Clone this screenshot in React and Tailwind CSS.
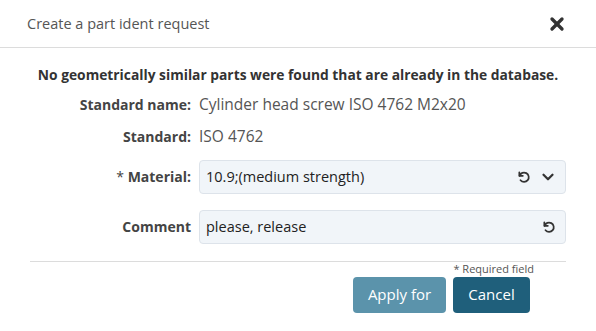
import { ChevronDown, X } from "lucide-react";

const Row = ({ label, children, className = "" }) => (
  <div className={`flex items-center ${className}`}>
    <div className="w-[169px] shrink-0 pr-2 text-right font-bold text-[#444]">{label}</div>
    <div className="flex-1 min-w-0">{children}</div>
  </div>
);

const Undo = () => (
  <svg width="14" height="14" viewBox="0 0 24 24" fill="none" stroke="#333" strokeWidth="3" strokeLinecap="round" strokeLinejoin="round">
    <path d="M4 4v6h6" />
    <path d="M4.5 10A8 8 0 1 1 6 17.5" />
  </svg>
);

export default function App() {
  return (
    <div className="w-[596px] h-[331px] bg-white text-[14px] text-[#333] font-['Open_Sans',sans-serif]">
      {/* Header */}
      <div className="h-[48px] flex items-center justify-between pl-[27px] pr-[29px] border-b border-[#dcdcdc]">
        <h1 className="text-[14.5px] text-[#555]">Create a part ident request</h1>
        <X size={20} strokeWidth={4} className="text-[#333]" />
      </div>

      {/* Body */}
      <div className="px-[30px] pt-[17px]">
        <p className="text-center text-[13.8px] font-bold text-[#333]">
          No geometrically similar parts were found that are already in the database.
        </p>
        <Row label="Standard name:" className="mt-[9px] h-[20px]">
          <span className="text-[15.5px] text-[#555]">Cylinder head screw ISO 4762 M2x20</span>
        </Row>
        <Row label="Standard:" className="mt-[12px] h-[20px]">
          <span className="text-[15.5px] text-[#555]">ISO 4762</span>
        </Row>
        <Row
          label={
            <>
              <span className="font-normal">* </span>Material:
            </>
          }
          className="mt-[13px]"
        >
          <div className="h-[34px] flex items-center justify-between pl-[6px] pr-[8px] rounded bg-[#f1f5f9] border border-[#dde3ea] text-[14.5px] text-[#222]">
            <span>10.9;(medium strength)</span>
            <div className="flex items-center gap-[8px]">
              <Undo />
              <ChevronDown size={18} strokeWidth={3} className="text-[#333]" />
            </div>
          </div>
        </Row>
        <Row label="Comment" className="mt-[16px]">
          <div className="h-[34px] flex items-center justify-between pl-[6px] pr-[9px] rounded bg-[#f1f5f9] border border-[#dde3ea] text-[14.5px] text-[#222]">
            <span>please, release</span>
            <Undo />
          </div>
        </Row>

        <div className="mt-[17px] border-t border-[#dcdcdc]" />
        <div className="flex flex-col items-end pr-[32px]">
          <span className="text-[11px] text-[#555] leading-[14px]">* Required field</span>
          <div className="mt-[1px] mr-[4px] flex gap-[7px]">
            <button className="h-[36px] w-[93px] rounded bg-[#5b93ab] text-white text-[15px]">Apply for</button>
            <button className="h-[36px] w-[77px] rounded bg-[#1f5f7b] text-white text-[15px]">Cancel</button>
          </div>
        </div>
      </div>
    </div>
  );
}
